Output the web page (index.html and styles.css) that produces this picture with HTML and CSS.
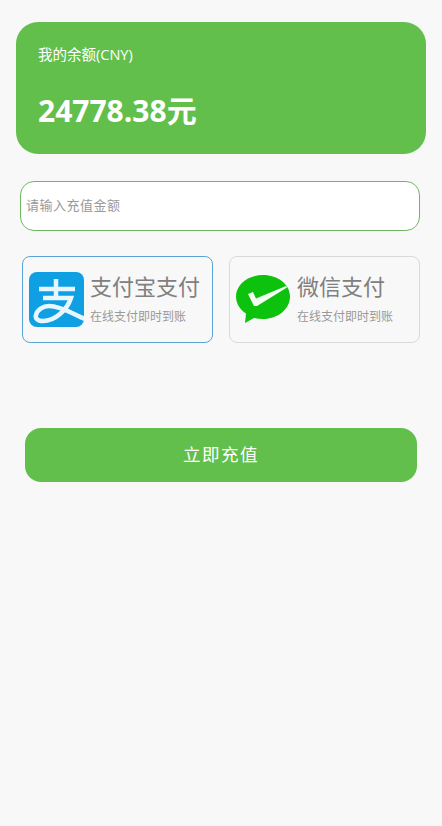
FILE: index.html
```html
<!DOCTYPE html>
<html lang="zh-CN">
<head>
    <meta charset="UTF-8">
    <meta name="viewport" content="width=device-width, initial-scale=1.0">
    <title>充值</title>
    <link rel="stylesheet" href="styles.css">
</head>
<body>

<div class="balance-card">
    <div class="balance-label">我的余额(CNY)</div>
    <div class="balance-value">24778.38元</div>
</div>

<div class="amount-box">
    <input type="text" class="amount-input" placeholder="请输入充值金额">
</div>

<div class="pay-list">
    <div class="pay-item pay-item-active">
        <svg class="pay-icon" viewBox="0 0 55 55">
            <rect width="55" height="55" rx="8" fill="#0f9fe3"/>
            <path d="M10 17H46M27 7V26M14 26H42C38 38 26 49 14 49C8 49 6 46 7 43C8 38 14 34 20 34C32 34 44 42 56 47" fill="none" stroke="#e8f7fd" stroke-width="4.500"/>
        </svg>
        <div class="pay-text">
            <div class="pay-name">支付宝支付</div>
            <div class="pay-desc">在线支付即时到账</div>
        </div>
    </div>
    <div class="pay-item">
        <svg class="pay-icon" viewBox="0 0 55 55">
            <path d="M27 3C12 3 0 12.500 0 24.500C0 31.500 4 37.500 10 41.500L9 51L18 46C21 46.700 24 47 27 47C42 47 54 37 54 24.500C54 12.500 42 3 27 3Z" fill="#0cc20c"/>
            <path d="M12 22L17 20L20 26.500L50 14L51 15.500L21 34L18 34Z" fill="#f4fdf2"/>
        </svg>
        <div class="pay-text">
            <div class="pay-name">微信支付</div>
            <div class="pay-desc">在线支付即时到账</div>
        </div>
    </div>
</div>

<button class="submit-btn">立即充值</button>

</body>
</html>
```

FILE: styles.css
```css
* {
    box-sizing: border-box;
}

body {
    font-family: "Open Sans", "Noto Sans CJK SC", sans-serif;
    background-color: #f8f8f8;
    margin: 0;
    padding: 22px 16px 0;
}

.balance-card {
    height: 132px;
    padding: 24px 22px 0;
    background-color: #62bf4c;
    border-radius: 22px;
    color: #fff;
}

.balance-label {
    font-size: 14.500px;
    line-height: 18px;
}

.balance-value {
    margin-top: 27px;
    font-size: 30px;
    font-weight: bold;
    line-height: 40px;
}

.amount-box {
    margin: 27px 6px 0 4px;
}

.amount-input {
    display: block;
    width: 100%;
    height: 50px;
    padding: 0 5px 2px;
    background-color: #fff;
    border: 1px solid #6fb862;
    border-radius: 14px;
    font-family: inherit;
    font-size: 13px;
    letter-spacing: .5px;
    outline: none;
}

.amount-input::placeholder {
    color: #999;
}

.pay-list {
    display: flex;
    gap: 16px;
    margin: 25px 6px 0;
}

.pay-item {
    display: flex;
    align-items: center;
    gap: 6px;
    flex: 1;
    height: 87px;
    padding: 0 6px;
    border: 1px solid #d9d9d9;
    border-radius: 8px;
}

.pay-item-active {
    border-color: #5aa5d8;
}

.pay-icon {
    flex-shrink: 0;
    width: 55px;
    height: 55px;
}

.pay-text {
    margin-top: -3px;
}

.pay-name {
    color: #808080;
    font-size: 22px;
    line-height: 30px;
}

.pay-desc {
    margin-top: 8px;
    color: #999;
    font-size: 12px;
    line-height: 16px;
}

.submit-btn {
    display: block;
    width: 392px;
    height: 54px;
    margin: 85px 0 0 9px;
    padding: 0 0 3px;
    background-color: #62bf4c;
    border: none;
    border-radius: 16px;
    color: #fff;
    font-family: inherit;
    font-size: 17.500px;
    letter-spacing: 1.500px;
}
```
